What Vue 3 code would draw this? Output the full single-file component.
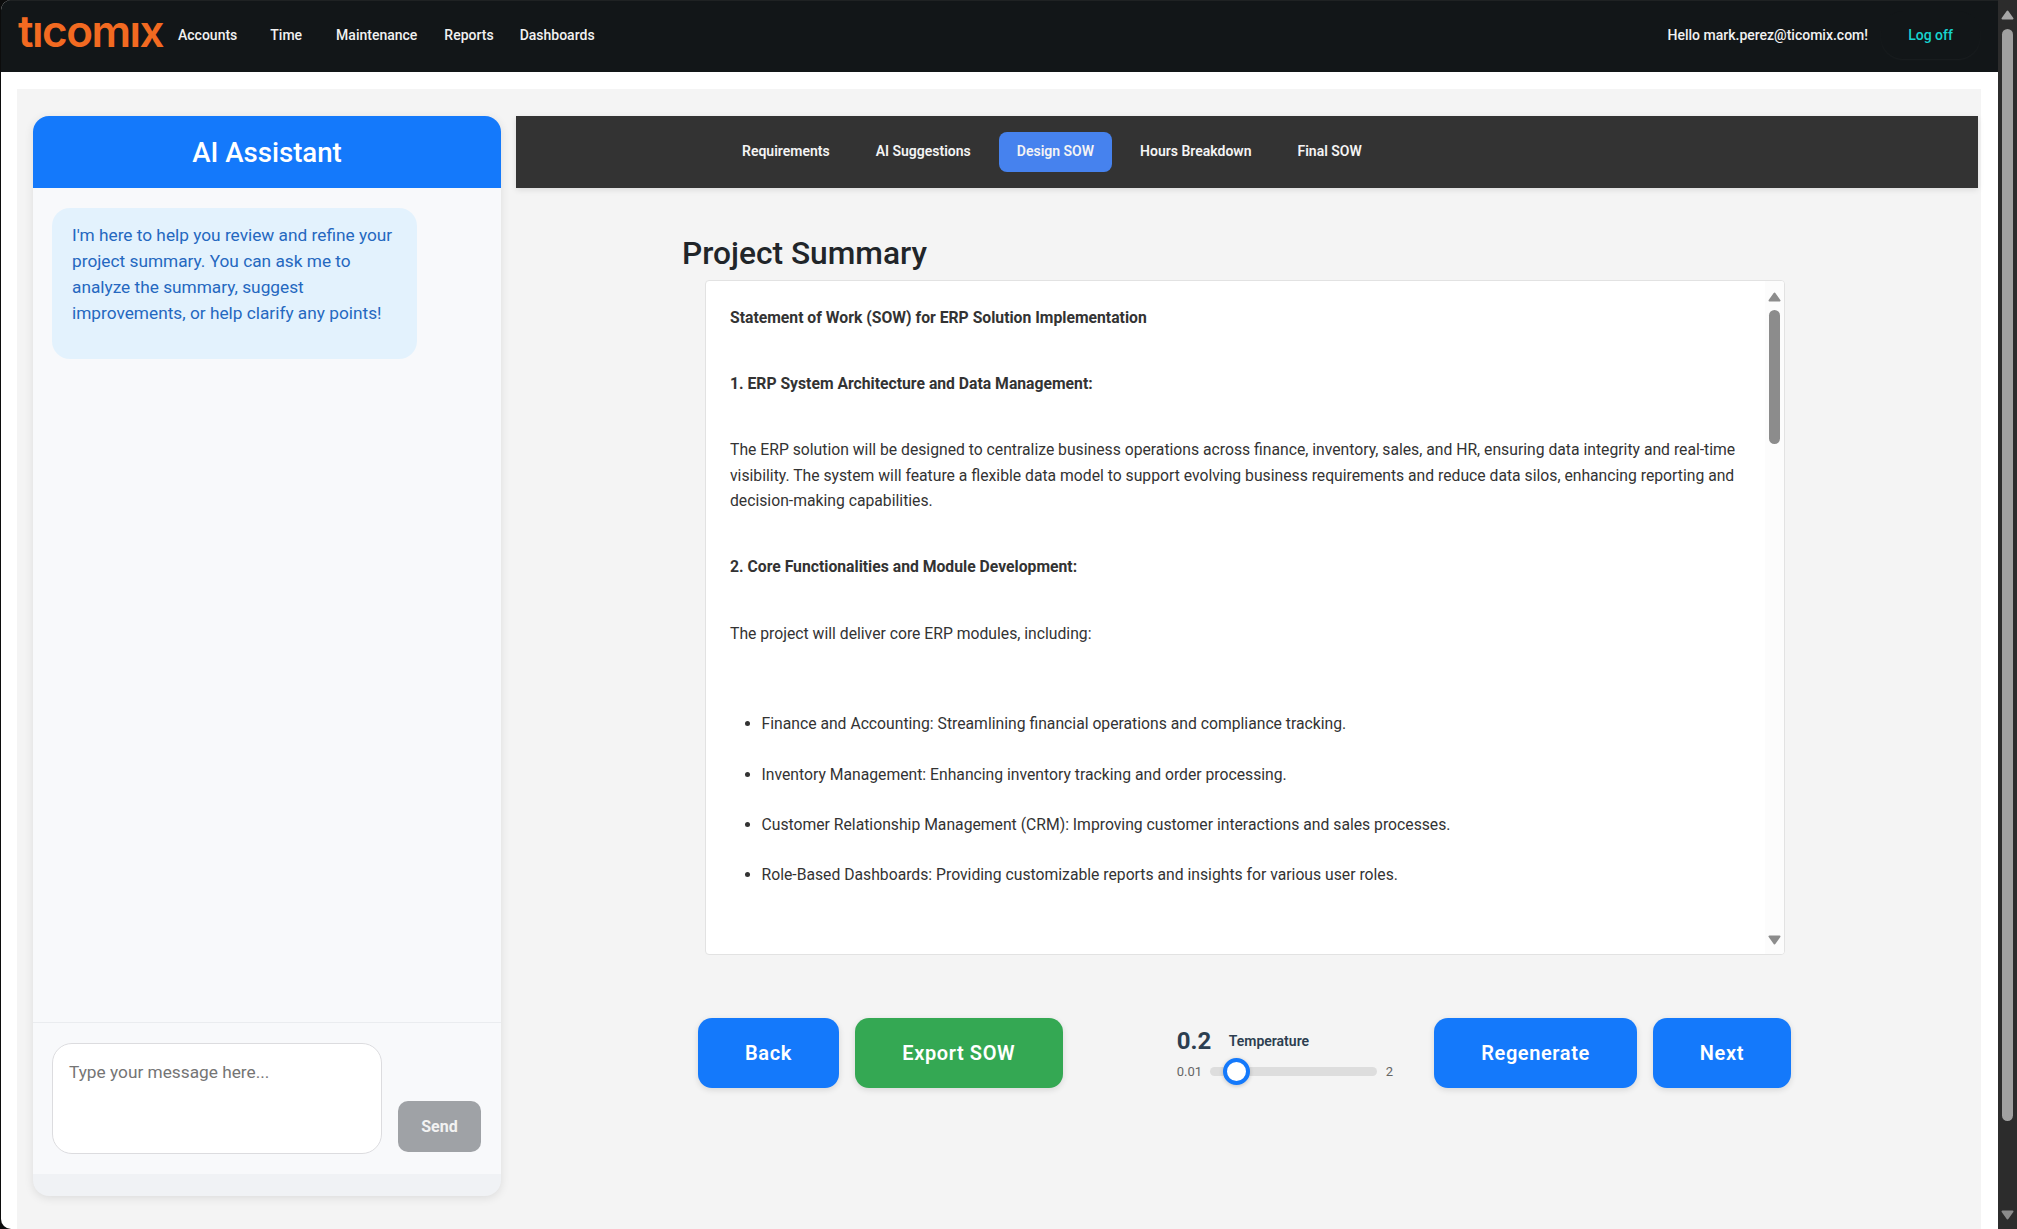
<template>
  <div class="window">
    <div class="viewport">
      <header class="topbar">
        <div class="logo">tıcomıx</div>
        <nav class="topnav">
          <a v-for="item in navItems" :key="item.label" class="topnav-item" :style="{ marginRight: item.gap + 'px' }">{{ item.label }}</a>
        </nav>
        <div class="user">
          <span class="hello">Hello mark.perez@ticomix.com!</span>
          <button class="logoff">Log off</button>
        </div>
      </header>

      <div class="page">
        <div class="panel">
          <aside class="chat">
            <h2 class="chat-title">AI Assistant</h2>
            <div class="chat-messages">
              <div class="bubble">I'm here to help you review and refine your project summary. You can ask me to analyze the summary, suggest improvements, or help clarify any points!</div>
            </div>
            <div class="chat-input">
              <textarea class="chat-text" placeholder="Type your message here..."></textarea>
              <button class="send">Send</button>
            </div>
            <div class="chat-foot"></div>
          </aside>

          <main class="main">
            <div class="tabs">
              <a v-for="tab in tabs" :key="tab" class="tab" :class="{ active: tab === 'Design SOW' }">{{ tab }}</a>
            </div>

            <div class="summary">
              <h1 class="summary-title">Project Summary</h1>
              <div class="doc">
                <div class="doc-text">
                  <p class="strong">Statement of Work (SOW) for ERP Solution Implementation</p>
                  <p class="strong">1. ERP System Architecture and Data Management:</p>
                  <p>The ERP solution will be designed to centralize business operations across finance, inventory, sales, and HR, ensuring data integrity and real-time visibility. The system will feature a flexible data model to support evolving business requirements and reduce data silos, enhancing reporting and decision-making capabilities.</p>
                  <p class="strong">2. Core Functionalities and Module Development:</p>
                  <p class="lead">The project will deliver core ERP modules, including:</p>
                  <ul>
                    <li>Finance and Accounting: Streamlining financial operations and compliance tracking.</li>
                    <li>Inventory Management: Enhancing inventory tracking and order processing.</li>
                    <li>Customer Relationship Management (CRM): Improving customer interactions and sales processes.</li>
                    <li>Role-Based Dashboards: Providing customizable reports and insights for various user roles.</li>
                  </ul>
                </div>
                <div class="doc-scroll">
                  <svg class="arrow-up" width="13" height="10" viewBox="0 0 13 10"><path d="M6.5 1.5 L11.5 8.5 H1.5 Z" fill="#8c8c8c" stroke="#8c8c8c" stroke-width="2" stroke-linejoin="round" /></svg>
                  <span class="doc-thumb"></span>
                  <svg class="arrow-down" width="13" height="10" viewBox="0 0 13 10"><path d="M1.5 1.5 H11.5 L6.5 8.5 Z" fill="#8c8c8c" stroke="#8c8c8c" stroke-width="2" stroke-linejoin="round" /></svg>
                </div>
              </div>

              <div class="actions">
                <div class="btn-group">
                  <button class="btn">Back</button>
                  <button class="btn green">Export SOW</button>
                </div>
                <div class="temp">
                  <div class="temp-head">
                    <span class="temp-value">0.2</span>
                    <span class="temp-label">Temperature</span>
                  </div>
                  <div class="temp-row">
                    <span class="temp-min">0.01</span>
                    <div class="track"><span class="thumb"></span></div>
                    <span class="temp-max">2</span>
                  </div>
                </div>
                <div class="btn-group right">
                  <button class="btn">Regenerate</button>
                  <button class="btn">Next</button>
                </div>
              </div>
            </div>
          </main>
        </div>
      </div>
    </div>

    <div class="page-scroll">
      <svg class="page-up" width="13" height="10" viewBox="0 0 13 10"><path d="M6.5 1.5 L11.5 8.5 H1.5 Z" fill="#a6a6a6" stroke="#a6a6a6" stroke-width="2" stroke-linejoin="round" /></svg>
      <span class="page-thumb"></span>
      <svg class="page-down" width="13" height="10" viewBox="0 0 13 10"><path d="M1.5 1.5 H11.5 L6.5 8.5 Z" fill="#8c8c8c" stroke="#8c8c8c" stroke-width="2" stroke-linejoin="round" /></svg>
    </div>
  </div>
</template>

<script setup>
const navItems = [
  { label: 'Accounts', gap: 33 },
  { label: 'Time', gap: 34 },
  { label: 'Maintenance', gap: 27 },
  { label: 'Reports', gap: 26 },
  { label: 'Dashboards', gap: 0 }
]

const tabs = ['Requirements', 'AI Suggestions', 'Design SOW', 'Hours Breakdown', 'Final SOW']
</script>

<style>
html, body {
  margin: 0;
  height: 100%;
  overflow: hidden;
  background: #0c0c0c;
}
</style>

<style scoped>
* {
  box-sizing: border-box;
}

.window {
  display: flex;
  width: 2017px;
  height: 1229px;
  font-family: Roboto, "Liberation Sans", sans-serif;
  color: #333;
  overflow: hidden;
}

.viewport {
  flex: 1;
  display: flex;
  flex-direction: column;
  min-width: 0;
  margin-left: 1px;
  background: #fff;
  border-radius: 10px 0 0 10px;
  overflow: hidden;
}

.topbar {
  flex: none;
  display: flex;
  align-items: center;
  height: 72px;
  padding-left: 17px;
  background: #121618;
  border-top: 1px solid #1f2223;
}

.logo {
  width: 160px;
  margin-top: -12px;
  font-family: Inter, sans-serif;
  font-size: 44px;
  font-weight: 600;
  letter-spacing: -1.5px;
  line-height: 44px;
  color: #f26a21;
}

.topnav {
  display: flex;
  margin-top: -4px;
}

.topnav-item {
  font-size: 14px;
  font-weight: 500;
  color: #f1f1f1;
}

.user {
  display: flex;
  align-items: center;
  margin-left: auto;
  margin-top: -3px;
}

.hello {
  font-size: 14px;
  font-weight: 500;
  color: #f1f1f1;
}

.logoff {
  width: 99px;
  height: 48px;
  margin: 0 18px 0 13px;
  border: none;
  border-radius: 22px;
  background: #121618;
  box-shadow: 0 1px 2px rgba(255, 255, 255, 0.04);
  font-family: inherit;
  font-size: 14px;
  font-weight: 500;
  color: #17d4cf;
}

.page {
  flex: 1;
  display: flex;
  min-height: 0;
  padding: 17px 17px 0 16px;
}

.panel {
  flex: 1;
  display: flex;
  gap: 15px;
  min-width: 0;
  padding: 27px 3px 33px 16px;
  background: #f4f4f4;
}

.chat {
  flex: none;
  display: flex;
  flex-direction: column;
  width: 468px;
  background: #f0f2f5;
  border-radius: 16px;
  box-shadow: 0 2px 10px rgba(0, 0, 0, 0.1);
  overflow: hidden;
}

.chat-title {
  flex: none;
  height: 72px;
  margin: 0;
  background: #1479fb;
  font-size: 27.6px;
  font-weight: 500;
  line-height: 73px;
  text-align: center;
  color: #fff;
}

.chat-messages {
  flex: 1;
  padding: 20px 19px;
  background: #f8f9fb;
}

.bubble {
  width: 365px;
  height: 151px;
  padding: 15px 20px;
  background: #e3f2fd;
  border-radius: 18px;
  font-size: 17.28px;
  line-height: 25.9px;
  color: #2568c0;
}

.chat-input {
  flex: none;
  display: flex;
  align-items: flex-end;
  gap: 16px;
  height: 152px;
  padding: 20px 20px 20px 19px;
  background: #f8f9fb;
  border-top: 1px solid #eaecef;
}

.chat-text {
  width: 330px;
  height: 111px;
  padding: 18px 16px;
  border: 1px solid #dcdcdf;
  border-radius: 20px;
  background: #fff;
  font-family: inherit;
  font-size: 17.28px;
  line-height: 20px;
  resize: none;
  outline: none;
}

.chat-text::placeholder {
  color: #757575;
}

.send {
  width: 83px;
  height: 51px;
  margin-bottom: 2px;
  border: none;
  border-radius: 10px;
  background: #9fa2a6;
  font-family: inherit;
  font-size: 16px;
  font-weight: 700;
  color: #f2f2f2;
}

.chat-foot {
  flex: none;
  height: 22px;
}

.main {
  flex: 1;
  min-width: 0;
}

.tabs {
  display: flex;
  align-items: center;
  gap: 10px;
  height: 72px;
  padding-left: 208px;
  background: #333;
  box-shadow: 0 2px 6px rgba(0, 0, 0, 0.1);
}

.tab {
  height: 40px;
  padding: 0 18px;
  border-radius: 8px;
  font-size: 14px;
  font-weight: 600;
  line-height: 38px;
  color: #f4f4f4;
}

.tab.active {
  background: #4682ee;
}

.summary {
  width: 1130px;
  margin: 0 auto;
}

.summary-title {
  height: 49px;
  margin: 43px 0 0;
  font-size: 31.7px;
  font-weight: 500;
  line-height: 45px;
  color: #212529;
}

.doc {
  position: relative;
  width: 1080px;
  height: 675px;
  margin: 0 0 0 23px;
  background: #fff;
  border: 1px solid #e2e2e2;
  border-radius: 4px;
  overflow: hidden;
}

.doc-text {
  padding: 24px 36px 0 24px;
  font-size: 15.73px;
  line-height: 25.6px;
  color: #333;
}

.doc-text p {
  margin: 0 0 40.5px;
}

.doc-text p.lead {
  margin-bottom: 65px;
}

.doc-text .strong {
  font-weight: 700;
}

.doc-text ul {
  margin: 0;
  padding-left: 31.5px;
}

.doc-text li {
  margin-bottom: 24.8px;
}

/* scrollbar of the text box */
.doc-scroll {
  position: absolute;
  top: 0;
  right: 0;
  bottom: 0;
  width: 19px;
  background: #fcfcfc;
}

.arrow-up,
.arrow-down {
  position: absolute;
  left: 3px;
}

.arrow-up {
  top: 11px;
}

.arrow-down {
  bottom: 9px;
}

.doc-thumb {
  position: absolute;
  top: 29px;
  left: 4px;
  width: 11px;
  height: 134px;
  border-radius: 6px;
  background: #8c8c8c;
}

.actions {
  display: flex;
  align-items: flex-start;
  width: 1093px;
  margin: 63px 0 0 16px;
}

.btn-group {
  display: flex;
  gap: 16px;
}

.btn-group.right {
  margin-left: auto;
}

.btn {
  height: 70px;
  padding: 0 47px;
  border: none;
  border-radius: 14px;
  background: #1479fb;
  box-shadow: 0 2px 6px rgba(0, 0, 0, 0.12);
  font-family: inherit;
  font-size: 20px;
  font-weight: 600;
  letter-spacing: 0.6px;
  color: #fff;
}

.btn.green {
  padding: 0 47.5px;
  background: #34a853;
}

.temp {
  margin: 9px 0 0 114px;
}

.temp-head {
  display: flex;
  align-items: center;
  height: 28px;
}

.temp-value {
  width: 52px;
  font-size: 24px;
  font-weight: 700;
  color: #2c3e50;
}

.temp-label {
  font-size: 14px;
  font-weight: 600;
  color: #2c3e50;
}

.temp-row {
  display: flex;
  align-items: center;
  height: 28px;
  margin-top: 2px;
  font-size: 13px;
  color: #666;
}

.temp-min {
  width: 33px;
}

.track {
  position: relative;
  width: 167px;
  height: 9px;
  border-radius: 5px;
  background: #ddd;
}

.thumb {
  position: absolute;
  top: -9px;
  left: 13px;
  width: 27px;
  height: 27px;
  border: 4px solid #1479fb;
  border-radius: 50%;
  background: #fff;
  box-shadow: 0 1px 4px rgba(0, 0, 0, 0.2);
}

.temp-max {
  margin-left: 9px;
}

/* browser scrollbar of the page */
.page-scroll {
  flex: none;
  position: relative;
  width: 19px;
  background: #2c2c2c;
}

.page-up,
.page-down {
  position: absolute;
  left: 3px;
}

.page-up {
  top: 10px;
}

.page-down {
  bottom: 9px;
}

.page-thumb {
  position: absolute;
  top: 29px;
  left: 4px;
  width: 11px;
  height: 1092px;
  border-radius: 6px;
  background: #a0a0a0;
}
</style>
